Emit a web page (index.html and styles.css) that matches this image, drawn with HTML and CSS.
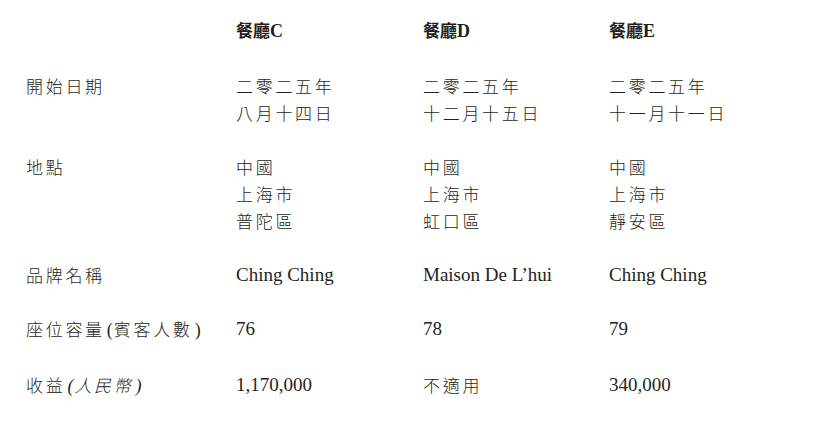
FILE: index.html
```html
<!DOCTYPE html>
<html lang="zh-Hant">
<head>
<meta charset="utf-8">
<link rel="stylesheet" href="styles.css">
</head>
<body>
<div class="table">
  <div class="cell"></div>
  <div class="cell head">餐廳<span class="lat">C</span></div>
  <div class="cell head">餐廳<span class="lat">D</span></div>
  <div class="cell head">餐廳<span class="lat">E</span></div>

  <div class="cell zh">開始日期</div>
  <div class="cell zh">二零二五年<br>八月十四日</div>
  <div class="cell zh">二零二五年<br>十二月十五日</div>
  <div class="cell zh">二零二五年<br>十一月十一日</div>

  <div class="cell zh">地點</div>
  <div class="cell zh">中國<br>上海市<br>普陀區</div>
  <div class="cell zh">中國<br>上海市<br>虹口區</div>
  <div class="cell zh">中國<br>上海市<br>靜安區</div>

  <div class="cell zh">品牌名稱</div>
  <div class="cell lat">Ching Ching</div>
  <div class="cell lat">Maison De L’hui</div>
  <div class="cell lat">Ching Ching</div>

  <div class="cell zh">座位容量<span class="paren">(</span>賓客人數<span class="paren">)</span></div>
  <div class="cell lat">76</div>
  <div class="cell lat">78</div>
  <div class="cell lat">79</div>

  <div class="cell zh">收益<span class="it"><span class="paren">(</span>人民幣<span class="paren">)</span></span></div>
  <div class="cell lat">1,170,000</div>
  <div class="cell zh">不適用</div>
  <div class="cell lat">340,000</div>
</div>
</body>
</html>
```
FILE: styles.css
```css
html, body {
  margin: 0;
  padding: 0;
  background: #ffffff;
}
body {
  color: #231f20;
  font-family: "Liberation Serif", "Noto Sans CJK TC", serif;
}
.table {
  display: grid;
  grid-template-columns: 210px 187px 186px 1fr;
  row-gap: 27px;
  padding: 16px 0 0 26px;
}
.cell {
  line-height: 27px;
  white-space: nowrap;
}
.zh {
  font-family: "Noto Sans CJK TC", sans-serif;
  font-size: 17px;
  font-weight: 300;
  letter-spacing: 2.7px;
}
.lat {
  font-family: "Liberation Serif", serif;
  font-size: 19px;
  letter-spacing: 0;
}
.head {
  font-family: "Noto Sans CJK TC", sans-serif;
  font-size: 17px;
  font-weight: 700;
}
.head .lat {
  font-weight: 700;
  font-size: 18px;
}
.paren {
  font-family: "Liberation Serif", serif;
  font-size: 18px;
  letter-spacing: 0;
  margin: 0 1px 0 2px;
}
.it {
  font-style: italic;
}
```
